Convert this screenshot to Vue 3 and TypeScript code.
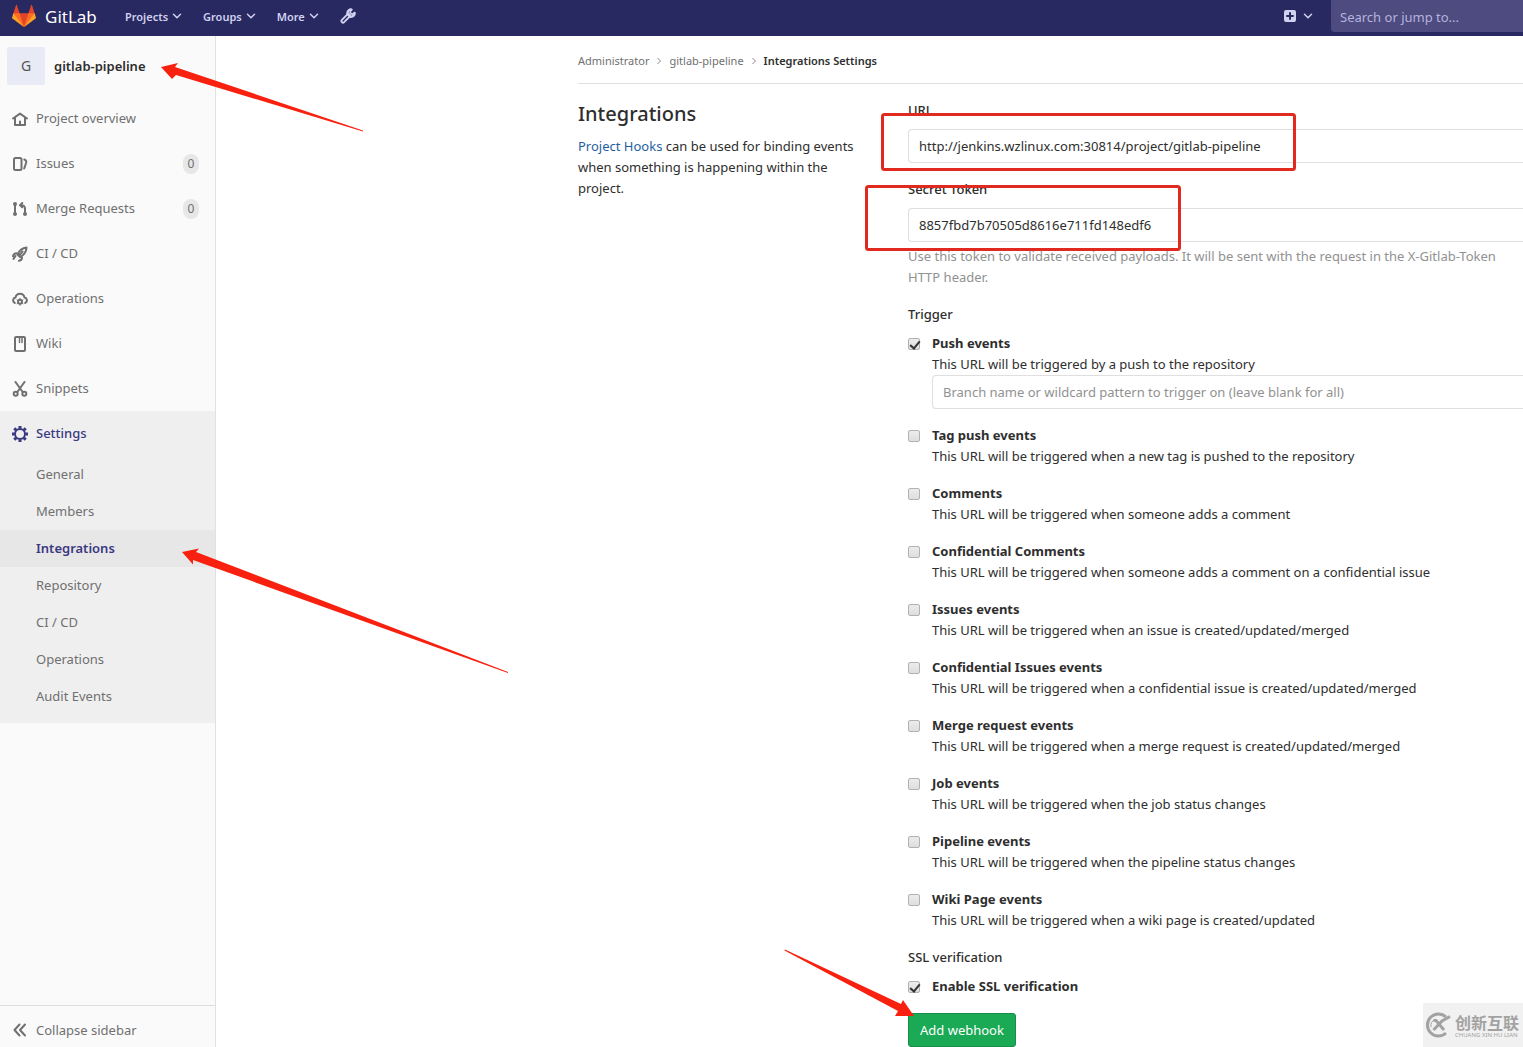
<script setup lang="ts">
import { ref } from 'vue'

interface NavItem {
  label: string
  icon: string
  count?: number
}

interface HookEvent {
  id: string
  title: string
  help: string
  checked: boolean
  filter?: string
}

const menus: string[] = ['Projects', 'Groups', 'More']

const navItems: NavItem[] = [
  { label: 'Project overview', icon: 'home' },
  { label: 'Issues', icon: 'issues', count: 0 },
  { label: 'Merge Requests', icon: 'merge', count: 0 },
  { label: 'CI / CD', icon: 'rocket' },
  { label: 'Operations', icon: 'cloud' },
  { label: 'Wiki', icon: 'book' },
  { label: 'Snippets', icon: 'scissors' },
]

const settingsItems: string[] = [
  'General',
  'Members',
  'Integrations',
  'Repository',
  'CI / CD',
  'Operations',
  'Audit Events',
]
const activeSetting = 'Integrations'

const url = ref('http://jenkins.wzlinux.com:30814/project/gitlab-pipeline')
const token = ref('8857fbd7b70505d8616e711fd148edf6')
const branchFilter = ref('')
const sslVerification = ref(true)

const events = ref<HookEvent[]>([
  {
    id: 'push',
    title: 'Push events',
    help: 'This URL will be triggered by a push to the repository',
    checked: true,
    filter: 'Branch name or wildcard pattern to trigger on (leave blank for all)',
  },
  { id: 'tag', title: 'Tag push events', help: 'This URL will be triggered when a new tag is pushed to the repository', checked: false },
  { id: 'comments', title: 'Comments', help: 'This URL will be triggered when someone adds a comment', checked: false },
  { id: 'conf-comments', title: 'Confidential Comments', help: 'This URL will be triggered when someone adds a comment on a confidential issue', checked: false },
  { id: 'issues', title: 'Issues events', help: 'This URL will be triggered when an issue is created/updated/merged', checked: false },
  { id: 'conf-issues', title: 'Confidential Issues events', help: 'This URL will be triggered when a confidential issue is created/updated/merged', checked: false },
  { id: 'merge', title: 'Merge request events', help: 'This URL will be triggered when a merge request is created/updated/merged', checked: false },
  { id: 'job', title: 'Job events', help: 'This URL will be triggered when the job status changes', checked: false },
  { id: 'pipeline', title: 'Pipeline events', help: 'This URL will be triggered when the pipeline status changes', checked: false },
  { id: 'wiki', title: 'Wiki Page events', help: 'This URL will be triggered when a wiki page is created/updated', checked: false },
])
</script>

<template>
  <div class="page">
    <header class="navbar">
      <a class="brand" href="#">
        <svg width="24" height="24" viewBox="0 0 36 36" aria-hidden="true">
          <path fill="#e24329" d="M2 14l9.38 9v-9l-4-12.28c-.205-.632-1.176-.632-1.38 0z" />
          <path fill="#e24329" d="M34 14l-9.38 9v-9l4-12.28c.205-.632 1.176-.632 1.38 0z" />
          <path fill="#e24329" d="M18 34.38L3 14h30z" />
          <path fill="#fc6d26" d="M18 34.38L11.38 14H2l4 11z" />
          <path fill="#fc6d26" d="M18 34.38L24.62 14H34l-4 11z" />
          <path fill="#fca326" d="M2 14L.1 20.16c-.18.565 0 1.2.5 1.56l17.42 12.66z" />
          <path fill="#fca326" d="M34 14l1.9 6.16c.18.565 0 1.2-.5 1.56L18 34.38z" />
        </svg>
        <span class="wordmark">GitLab</span>
      </a>
      <nav class="menus">
        <button v-for="menu in menus" :key="menu" type="button" class="menu">
          {{ menu }}
          <svg class="caret" width="10" height="10" viewBox="0 0 10 10" aria-hidden="true">
            <path d="M1.5 3.2L5 6.7l3.5-3.5" />
          </svg>
        </button>
        <a class="admin" href="#" aria-label="Admin area">
          <svg width="16" height="16" viewBox="0 0 16 16" fill="none" stroke-linecap="round" aria-hidden="true">
            <path d="M3 13l5.500-5.500" stroke="currentColor" stroke-width="5" />
            <path d="M11.500 1.600A3.600 3.600 0 1 0 14.600 5" stroke="currentColor" stroke-width="2.400" />
            <path d="M14.600 5l-2.600 1.200-2-2L11.500 1.600" stroke="currentColor" stroke-width="1.600" stroke-linejoin="round" />
            <path d="M3 13l4.500-4.500" stroke="#292961" stroke-width="1.300" />
          </svg>
        </a>
      </nav>
      <div class="nav-right">
        <button type="button" class="menu" aria-label="New">
          <svg width="12" height="12" viewBox="0 0 12 12" aria-hidden="true">
            <rect width="12" height="12" rx="2" fill="currentColor" />
            <path d="M6 3v6M3 6h6" stroke="#292961" stroke-width="2" stroke-linecap="round" />
          </svg>
          <svg class="caret" width="10" height="10" viewBox="0 0 10 10" aria-hidden="true">
            <path d="M1.5 3.2L5 6.7l3.5-3.5" />
          </svg>
        </button>
        <input class="search" type="search" placeholder="Search or jump to..." aria-label="Search" />
      </div>
    </header>

    <div class="body">
      <aside class="sidebar">
        <a class="project" href="#">
          <span class="avatar">G</span>
          <span class="project-name">gitlab-pipeline</span>
        </a>
        <nav class="nav">
          <a v-for="item in navItems" :key="item.label" class="nav-item" href="#">
            <svg class="icon" width="16" height="16" viewBox="0 0 16 16" aria-hidden="true">
              <path v-if="item.icon === 'home'" d="M1 7.500L8 2.600l7 4.900M3 7v7h10V7M8 10.500V14" />
              <template v-else-if="item.icon === 'issues'">
                <rect x="2" y="2" width="7.500" height="12" rx="1.500" />
                <path d="M12.300 3.500c2.300 1 2.300 1.600 1.600 4l-1.700 5" />
              </template>
              <template v-else-if="item.icon === 'merge'">
                <path d="M3 3v10M13 13V7.500C13 5 12 4.200 8.500 4.200M10.300 2L8 4.200l2.300 2.200" />
                <g class="solid">
                  <circle cx="3" cy="3" r="2" />
                  <circle cx="3" cy="13" r="2" />
                  <circle cx="13" cy="13" r="2" />
                </g>
              </template>
              <template v-else-if="item.icon === 'rocket'">
                <path d="M5.500 8.500C7.500 4 10 2 14.500 1.500 14.300 6 12 9 8 11zM7.500 9l3-3.500" />
                <path d="M1 10.300c.5-2.300 1.800-3 3.600-3M3.500 10l-2 3M7 14.800c2-.3 3-1.500 3-3.300" />
              </template>
              <template v-else-if="item.icon === 'cloud'">
                <path d="M2.800 12C.2 10.500.8 7 3.500 6.600 4.500 1.600 11.500 1.600 12.500 6.600 15.300 7 15.800 10.500 13.200 12" />
                <circle cx="8" cy="10.800" r="2" />
                <path class="teeth" d="M8 7.300v1.500M8 12.800v1.500M5 9l1.300.8M9.700 11.800l1.300.8M11 9l-1.300.8M6.300 11.800l-1.300.8" />
              </template>
              <template v-else-if="item.icon === 'book'">
                <rect x="3" y="1" width="10" height="14" rx="1" />
                <path class="ribbon" d="M7.500 1.500v5M10 1.500v5" />
              </template>
              <template v-else>
                <path d="M3.500 1l6.800 9.500M12.500 1L5.700 10.500" />
                <circle cx="3.700" cy="12.700" r="2" />
                <circle cx="12.300" cy="12.700" r="2" />
              </template>
            </svg>
            <span>{{ item.label }}</span>
            <span v-if="item.count !== undefined" class="badge">{{ item.count }}</span>
          </a>
        </nav>
        <nav class="settings">
          <a class="nav-item settings-head" href="#">
            <svg class="icon" width="16" height="16" viewBox="0 0 16 16" aria-hidden="true">
              <circle cx="8" cy="8" r="5" stroke-width="2" />
              <path
                stroke-width="3" stroke-linecap="butt"
                d="M8 0v2.500M8 13.500V16M0 8h2.500M13.500 8H16M2.300 2.300l1.900 1.900M11.800 11.800l1.900 1.900M13.700 2.300l-1.900 1.900M4.200 11.800l-1.900 1.900" />
            </svg>
            <span>Settings</span>
          </a>
          <a
            v-for="item in settingsItems" :key="item" href="#"
            class="sub-item" :class="{ active: item === activeSetting }">{{ item }}</a>
        </nav>
        <button type="button" class="collapse">
          <svg class="icon" width="16" height="16" viewBox="0 0 16 16" aria-hidden="true">
            <path d="M7.500 2.500L2.500 8l5 5.500M13 2.500L8 8l5 5.500" />
          </svg>
          Collapse sidebar
        </button>
      </aside>

      <main class="content">
        <nav class="breadcrumbs" aria-label="Breadcrumb">
          <a href="#">Administrator</a>
          <svg class="sep" width="8" height="8" viewBox="0 0 8 8" aria-hidden="true"><path d="M2.500 1l3 3-3 3" /></svg>
          <a href="#">gitlab-pipeline</a>
          <svg class="sep" width="8" height="8" viewBox="0 0 8 8" aria-hidden="true"><path d="M2.500 1l3 3-3 3" /></svg>
          <strong>Integrations Settings</strong>
        </nav>
        <div class="columns">
          <section class="intro">
            <h1>Integrations</h1>
            <p><a href="#">Project Hooks</a> can be used for binding events when something is happening within the project.</p>
          </section>
          <form class="form" @submit.prevent>
            <div class="group">
              <label class="label" for="hook-url">URL</label>
              <input id="hook-url" v-model="url" class="field" type="text" />
            </div>
            <div class="group">
              <label class="label" for="hook-token">Secret Token</label>
              <input id="hook-token" v-model="token" class="field" type="text" />
              <p class="hint">Use this token to validate received payloads. It will be sent with the request in the X-Gitlab-Token HTTP header.</p>
            </div>
            <p class="label">Trigger</p>
            <div v-for="event in events" :key="event.id" class="group check-row">
              <input :id="event.id" v-model="event.checked" class="check" type="checkbox" />
              <div class="check-body">
                <label class="check-title" :for="event.id">{{ event.title }}</label>
                <p>{{ event.help }}</p>
                <input
                  v-if="event.filter" v-model="branchFilter" class="field" type="text"
                  :placeholder="event.filter" aria-label="Branch filter" />
              </div>
            </div>
            <p class="label">SSL verification</p>
            <div class="group check-row">
              <input id="ssl" v-model="sslVerification" class="check" type="checkbox" />
              <label class="check-title" for="ssl">Enable SSL verification</label>
            </div>
            <button type="submit" class="submit">Add webhook</button>
          </form>
        </div>
      </main>
    </div>

    <svg class="marks" aria-hidden="true">
      <g fill="none" stroke="#e0291f" stroke-width="3">
        <rect x="882.500" y="114.500" width="412" height="55" rx="2" />
        <rect x="866.500" y="186.500" width="313" height="63" rx="2" />
      </g>
      <g fill="#f8210f">
        <path d="M161 67l17-4-3 4 188 63.500v1L176 75l-4 4z" />
        <path d="M182 552l17-3.500-3 3.500 312 120v1L193 560v4.500z" />
        <path d="M914 1016l-11-16-2 4-116-54.500-.5 1L898 1011l-3 5z" />
      </g>
    </svg>

    <div class="watermark">
      <svg width="26" height="26" viewBox="0 0 26 26" fill="none" stroke="#a2a2a2" aria-hidden="true">
        <path d="M21 5A11 11 0 1 0 21 21" stroke-width="3" />
        <path d="M8.500 8.500h2.500l8 9.500M25 4.500L17 9 8.500 18" stroke-width="3" />
        <path d="M6 15a6.500 6.500 0 0 1 4-7.500" stroke-width="1" />
      </svg>
      <div class="watermark-text">
        <span class="cn">创新互联</span>
        <span class="en">CHUANG XIN HU LIAN</span>
      </div>
    </div>
  </div>
</template>

<style>
body {
  margin: 0;
  background: #fff;
}
</style>

<style scoped>
.page {
  position: relative;
  display: flex;
  flex-direction: column;
  min-height: 100vh;
  overflow: hidden;
  font-family: "Noto Sans", "Noto Sans CJK SC", sans-serif;
  font-size: 13px;
  line-height: 21px;
  color: #2e2e2e;
}

.page * {
  box-sizing: border-box;
}

p,
h1 {
  margin: 0;
}

a {
  color: inherit;
  text-decoration: none;
}

button,
input {
  font: inherit;
}

.navbar {
  display: flex;
  align-items: center;
  height: 36px;
  padding: 0 0 4px 12px;
  background: #292961;
  color: #d1d1f0;
}

.brand {
  display: flex;
  align-items: center;
  gap: 9px;
  width: 113px;
  height: 32px;
  color: #fff;
}

.wordmark {
  font-size: 17px;
}

.menus,
.nav-right {
  display: flex;
  align-items: center;
  height: 32px;
}

.menus {
  gap: 21px;
}

.menu {
  display: flex;
  align-items: center;
  gap: 4px;
  padding: 0;
  border: 0;
  background: none;
  color: inherit;
  font-size: 11px;
  font-weight: 600;
}

.caret {
  fill: none;
  stroke: currentColor;
  stroke-width: 1.5;
  stroke-linecap: round;
  stroke-linejoin: round;
}

.admin {
  display: flex;
}

.nav-right {
  gap: 18px;
  margin-left: auto;
}

.nav-right .menu {
  gap: 7px;
}

.search {
  width: 192px;
  height: 32px;
  padding: 2px 9px 0;
  border: 0;
  border-radius: 0 0 0 4px;
  background: #4d4b80;
  color: #fff;
  appearance: none;
}

.search::placeholder {
  color: #b6b3dc;
}

.body {
  display: flex;
  flex: 1;
}

.sidebar {
  display: flex;
  flex-direction: column;
  flex: none;
  width: 216px;
  border-right: 1px solid #e1e1e1;
  background: #fafafa;
  color: #707070;
}

.project {
  display: flex;
  align-items: center;
  gap: 9px;
  height: 60px;
  padding-left: 7px;
}

.avatar {
  width: 38px;
  border-radius: 2px;
  background: #e8eaf6;
  color: #555;
  font-size: 14px;
  line-height: 38px;
  text-align: center;
}

.project-name {
  color: #2e2e2e;
  font-weight: 600;
}

.nav-item {
  display: flex;
  align-items: center;
  gap: 8px;
  height: 45px;
  padding: 0 16px 0 12px;
}

.icon {
  fill: none;
  stroke: currentColor;
  stroke-width: 2;
  stroke-linecap: round;
  stroke-linejoin: round;
}

.solid {
  fill: currentColor;
  stroke: none;
}

.teeth {
  stroke-width: 1;
}

.ribbon {
  stroke-width: 1.5;
}

.badge {
  width: 16px;
  margin-left: auto;
  border-radius: 10px;
  background: #e7e7e7;
  font-size: 12px;
  line-height: 20px;
  text-align: center;
}

.settings {
  padding-bottom: 8px;
  background: #efefef;
}

.settings-head {
  color: #393982;
  font-weight: 500;
}

.sub-item {
  display: block;
  padding: 0 36px;
  line-height: 37px;
}

.sub-item.active {
  background: #e7e7e7;
  color: #393982;
  font-weight: 600;
}

.collapse {
  display: flex;
  align-items: center;
  gap: 8px;
  height: 42px;
  margin-top: auto;
  padding: 7px 12px 0;
  border: 0;
  border-top: 1px solid #dedede;
  background: none;
  color: inherit;
}

.content {
  flex: 1;
  min-width: 0;
  padding-left: 362px;
}

.breadcrumbs {
  display: flex;
  align-items: center;
  gap: 6px;
  height: 48px;
  padding-top: 2px;
  border-bottom: 1px solid #e1e1e1;
  color: #707070;
  font-size: 11px;
}

.breadcrumbs strong {
  color: #2e2e2e;
  font-weight: 600;
}

.sep {
  fill: none;
  stroke: #8a8a8a;
}

.columns {
  display: flex;
  gap: 40px;
  padding-top: 16px;
}

.intro {
  flex: none;
  width: 290px;
}

h1 {
  margin-bottom: 8px;
  font-size: 20px;
  font-weight: 500;
  line-height: 28px;
}

.intro a {
  color: #1f5f9f;
}

.form {
  flex: 1;
  min-width: 0;
}

.group {
  margin-bottom: 16px;
}

.label {
  display: block;
  margin-bottom: 8px;
  font-weight: 500;
}

.field {
  display: block;
  width: 100%;
  height: 34px;
  padding: 0 10px;
  border: 1px solid #dfdfdf;
  border-right: 0;
  border-radius: 4px 0 0 4px;
  background: #fff;
  color: #2e2e2e;
}

.field::placeholder {
  color: #919191;
}

.hint {
  margin-top: 4px;
  color: #919191;
}

.check-row {
  display: flex;
  align-items: flex-start;
  gap: 12px;
}

.check-body {
  flex: 1;
}

.check-title {
  display: block;
  font-weight: 700;
}

.check {
  position: relative;
  flex: none;
  width: 12px;
  height: 12px;
  margin: 5px 0 4px;
  border: 1px solid #b2b2b2;
  border-radius: 2px;
  background: linear-gradient(#ececec, #dedede);
  appearance: none;
}

.check:checked::after {
  content: "";
  position: absolute;
  top: 0;
  left: 3px;
  width: 4px;
  height: 8px;
  border: solid #333;
  border-width: 0 2px 2px 0;
  transform: rotate(40deg);
}

.submit {
  display: block;
  height: 34px;
  padding: 0 11px;
  border: 1px solid #168f48;
  border-radius: 3px;
  background: #1aaa55;
  color: #fff;
}

.marks {
  position: absolute;
  inset: 0;
  width: 100%;
  height: 100%;
  pointer-events: none;
}

.watermark {
  position: absolute;
  right: 0;
  bottom: 0;
  display: flex;
  align-items: center;
  gap: 4px;
  width: 100px;
  height: 44px;
  padding-left: 2px;
  background: #f1f1f1;
  color: #a2a2a2;
}

.watermark-text {
  display: flex;
  flex-direction: column;
  padding-top: 2px;
  white-space: nowrap;
}

.cn {
  font-family: "Noto Sans CJK SC", sans-serif;
  font-size: 16px;
  font-weight: 700;
  line-height: 19px;
}

.en {
  font-size: 6px;
  line-height: 7px;
}
</style>
